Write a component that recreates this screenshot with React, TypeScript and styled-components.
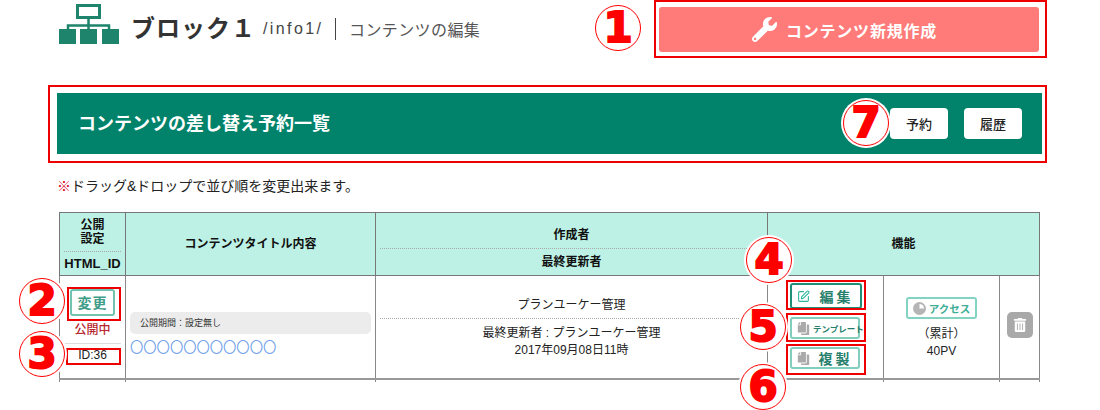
import React from "react";
import styled, { createGlobalStyle } from "styled-components";
import { FaWrench, FaTrashAlt, FaCopy } from "react-icons/fa";
import { LuSquarePen } from "react-icons/lu";

const Global = createGlobalStyle`
  html, body { margin: 0; padding: 0; background: #fff; }
  body { font-family: "Liberation Sans", "Noto Sans CJK JP", sans-serif; color: #222; }
`;

const Page = styled.div`
  position: relative;
  width: 1100px;
  height: 410px;
  overflow: hidden;
  padding-left: 57px;
  box-sizing: border-box;
`;

const TopBar = styled.header`
  display: flex;
  align-items: flex-start;
  height: 58px;
  padding-left: 2px;
`;

const TitleGroup = styled.div`
  display: flex;
  align-items: center;
  height: 58px;
`;

const TitleRow = styled.div`
  display: flex;
  align-items: center;
  margin-top: -1px;
`;

const BlockIcon = styled.svg`
  width: 60px;
  height: 40px;
  margin-top: 4px;
  align-self: flex-start;
  flex: none;
`;

const BlockTitle = styled.h1`
  margin: 0 0 0 12px;
  font-size: 24px;
  line-height: 30px;
  font-weight: 700;
  color: #333;
  letter-spacing: 1px;
  width: 132px;
  white-space: nowrap;
`;

const Path = styled.span`
  font-size: 16px;
  letter-spacing: 2.4px;
  color: #444;
  width: 72px;
  white-space: nowrap;
`;

const Divider = styled.span`
  width: 1px;
  height: 22px;
  background: #444;
  margin-right: 13px;
`;

const PageName = styled.span`
  font-size: 16px;
  color: #555;
  white-space: nowrap;
  letter-spacing: 0.4px;
`;

const NewButton = styled.button`
  position: absolute;
  left: 659px;
  top: 7px;
  width: 380px;
  height: 45px;
  border: 0;
  border-radius: 3px;
  background: #ff7b79;
  color: #fff;
  font: 700 16px "Liberation Sans", "Noto Sans CJK JP", sans-serif;
  letter-spacing: 0.8px;
  display: flex;
  align-items: center;
  justify-content: center;
  gap: 9px;
  padding: 0 9px 0 0;
`;

const Banner = styled.section`
  display: flex;
  align-items: center;
  justify-content: space-between;
  width: 985px;
  height: 61px;
  margin-top: 35px;
  padding: 0 20px 0 21px;
  box-sizing: border-box;
  background: #00836a;
`;

const BannerTitle = styled.h2`
  margin: 0 0 3px;
  font-size: 18px;
  font-weight: 700;
  color: #fff;
`;

const BannerActions = styled.div`
  display: flex;
  gap: 16px;
`;

const BannerButton = styled.button`
  width: 58px;
  height: 31px;
  border: 0;
  border-radius: 4px;
  background: #fff;
  color: #222;
  font: 500 13px "Liberation Sans", "Noto Sans CJK JP", sans-serif;
  padding: 0;
`;

const Note = styled.p`
  margin: 23px 0 0;
  height: 18px;
  line-height: 18px;
  font-size: 14px;
  color: #222;
  white-space: nowrap;
  b { color: #d8001c; font-weight: 400; }
`;

const TableClip = styled.div`
  margin: 17px 0 0 2px;
  width: 983px;
  height: 170px;
  overflow: hidden;
`;

const Table = styled.table`
  width: 980px;
  border-collapse: collapse;
  table-layout: fixed;
  font-size: 12px;
`;

const Th = styled.th`
  background: #bdf1e5;
  border: 1px solid #777;
  padding: 0 4px;
  height: 62px;
  font-size: 12px;
  font-weight: 700;
  color: #111;
  line-height: 14px;
`;

const Td = styled.td`
  border-left: 1px solid #888;
  border-right: 1px solid #888;
  border-bottom: 2px solid #999;
  height: 102px;
  padding: 0;
  text-align: center;
  vertical-align: middle;
  color: #222;
`;

const StubTd = styled.td`
  border-left: 1px solid #888;
  border-right: 1px solid #888;
  height: 8px;
  padding: 0;
`;

const HeadStack = styled.div<{ $offset?: number }>`
  display: flex;
  flex-direction: column;
  align-items: stretch;
  margin-top: ${(p) => p.$offset ?? 0}px;
`;

const HeadPart = styled.div<{ $h: number; $size?: number }>`
  height: ${(p) => p.$h}px;
  font-size: ${(p) => p.$size ?? 12}px;
  display: flex;
  align-items: center;
  justify-content: center;
  white-space: nowrap;
`;

const DottedRule = styled.div`
  border-top: 1px dotted #aaa;
  height: 0;
`;

const ChangeButton = styled.button`
  width: 45px;
  height: 27px;
  border: 2px solid #72c2b0;
  border-radius: 3px;
  background: #fff;
  color: #3f9c88;
  font: 700 14px "Liberation Sans", "Noto Sans CJK JP", sans-serif;
  padding: 0;
  letter-spacing: 1px;
`;

const StatusCell = styled.div`
  display: flex;
  flex-direction: column;
  align-items: center;
  margin-top: -4px;
`;

const StatusText = styled.div`
  font-size: 12px;
  font-weight: 500;
  color: #b5272d;
  margin-top: 7px;
  line-height: 14px;
`;

const IdText = styled.div`
  width: 56px;
  margin-top: 6px;
  padding-top: 4px;
  border-top: 1px solid #ddd;
  font-size: 12px;
  line-height: 14px;
`;

const ContentCell = styled.div`
  padding: 0 4px;
  text-align: left;
  margin-top: 14px;
`;

const Period = styled.div`
  height: 22px;
  line-height: 22px;
  border-radius: 5px;
  background: #ececec;
  padding-left: 10px;
  font-size: 9px;
  color: #333;
`;

const Circles = styled.div`
  margin-top: 6px;
  font-size: 13.3px;
  line-height: 16px;
  color: #6f9fe8;
  white-space: nowrap;
`;

const AuthorName = styled.div`
  font-size: 12px;
  line-height: 15px;
  margin-top: 3px;
  padding-bottom: 5px;
`;

const AuthorRule = styled.div`
  border-top: 1px dotted #aaa;
  margin: 0 4px 6px;
`;

const AuthorMeta = styled.div`
  font-size: 12px;
  line-height: 17px;
`;

const ActionStack = styled.div`
  display: flex;
  flex-direction: column;
  align-items: flex-start;
  padding-left: 22px;
  margin-top: -2px;
`;

const ActionButton = styled.button<{ $w: number; $h: number; $mt: number; $strong?: boolean }>`
  width: ${(p) => p.$w}px;
  height: ${(p) => p.$h}px;
  margin-top: ${(p) => p.$mt}px;
  border: 2px solid ${(p) => (p.$strong ? "#1f8f78" : "#82cdbb")};
  border-radius: 3px;
  background: #fff;
  color: #26806c;
  display: flex;
  align-items: center;
  gap: 3px;
  padding: 0 0 0 5px;
  font: 700 13px "Liberation Sans", "Noto Sans CJK JP", sans-serif;
  white-space: nowrap;
`;

const ActionLabel = styled.span<{ $size: number; $ls: number }>`
  font-size: ${(p) => p.$size}px;
  letter-spacing: ${(p) => p.$ls}px;
  flex: 1;
  text-align: center;
`;

const AccessCell = styled.div`
  margin-top: 3px;
`;

const AccessButton = styled.button`
  width: 71px;
  height: 22px;
  margin: 0 auto 7px;
  border: 2px solid #82d3c2;
  border-radius: 3px;
  background: #fff;
  color: #3fae96;
  display: flex;
  align-items: center;
  justify-content: center;
  gap: 3px;
  padding: 0;
  font: 700 10.5px "Liberation Sans", "Noto Sans CJK JP", sans-serif;
`;

const AccessText = styled.div`
  font-size: 12px;
  line-height: 17px;
`;

const TrashButton = styled.button`
  width: 26px;
  height: 26px;
  border: 0;
  border-radius: 5px;
  background: #a9a9a9;
  color: #fff;
  display: inline-flex;
  align-items: center;
  justify-content: center;
  padding: 0;
  margin-bottom: 4px;
  vertical-align: middle;
`;

const Frame = styled.div<{ $x: number; $y: number; $w: number; $h: number }>`
  position: absolute;
  left: ${(p) => p.$x}px;
  top: ${(p) => p.$y}px;
  width: ${(p) => p.$w}px;
  height: ${(p) => p.$h}px;
  border: 2px solid #ee0000;
  box-sizing: border-box;
  pointer-events: none;
`;

const Badge = styled.div<{ $x: number; $y: number }>`
  position: absolute;
  left: ${(p) => p.$x - 23}px;
  top: ${(p) => p.$y - 23}px;
  width: 46px;
  height: 46px;
  box-sizing: border-box;
  border: 1.5px solid #f00;
  border-radius: 50%;
  background: #fff;
  box-shadow: 0 0 0 2px #fff;
  color: #f00;
  display: flex;
  align-items: center;
  justify-content: center;
  font: 700 42px "DejaVu Sans", sans-serif;
  -webkit-text-stroke: 2px #f00;
  line-height: 1;
`;

const copyIcon = <FaCopy size={13} color="#aaa" style={{ transform: "scaleX(-1)", flex: "none" }} />;

export default function App() {
  return (
    <Page>
      <Global />
      <TopBar>
        <BlockIcon viewBox="0 0 60 40">
          <rect x="18.5" y="1.5" width="22" height="12" fill="none" stroke="#1e846c" strokeWidth="3" />
          <path d="M29.5 15v5M9 28v-6.5h41V28M29.5 20v8" fill="none" stroke="#1e846c" strokeWidth="2.5" />
          <rect x="0" y="25" width="17" height="15" fill="#1e846c" />
          <rect x="21" y="25" width="17" height="15" fill="#1e846c" />
          <rect x="43" y="25" width="17" height="15" fill="#1e846c" />
        </BlockIcon>
        <TitleGroup>
          <TitleRow>
            <BlockTitle>ブロック１</BlockTitle>
            <Path>/info1/</Path>
            <Divider />
            <PageName>コンテンツの編集</PageName>
          </TitleRow>
        </TitleGroup>
      </TopBar>
      <NewButton>
        <FaWrench size={25} />
        コンテンツ新規作成
      </NewButton>

      <Banner>
        <BannerTitle>コンテンツの差し替え予約一覧</BannerTitle>
        <BannerActions>
          <BannerButton>予約</BannerButton>
          <BannerButton>履歴</BannerButton>
        </BannerActions>
      </Banner>

      <Note>
        <b>※</b>ドラッグ&amp;ドロップで並び順を変更出来ます。
      </Note>

      <TableClip>
        <Table>
          <colgroup>
            <col width="66" />
            <col width="250" />
            <col width="392" />
            <col width="116" />
            <col width="116" />
            <col width="40" />
          </colgroup>
          <thead>
            <tr>
              <Th>
                <HeadStack>
                  <HeadPart $h={38}>公開<br />設定</HeadPart>
                  <DottedRule />
                  <HeadPart $h={23} $size={13}>HTML_ID</HeadPart>
                </HeadStack>
              </Th>
              <Th>コンテンツタイトル内容</Th>
              <Th>
                <HeadStack $offset={9}>
                  <HeadPart $h={26}>作成者</HeadPart>
                  <DottedRule />
                  <HeadPart $h={26}>最終更新者</HeadPart>
                </HeadStack>
              </Th>
              <Th colSpan={3}>機能</Th>
            </tr>
          </thead>
          <tbody>
            <tr>
              <Td>
                <StatusCell>
                  <ChangeButton>変更</ChangeButton>
                  <StatusText>公開中</StatusText>
                  <IdText>ID:36</IdText>
                </StatusCell>
              </Td>
              <Td>
                <ContentCell>
                  <Period>公開期間：設定無し</Period>
                  <Circles>〇〇〇〇〇〇〇〇〇〇〇</Circles>
                </ContentCell>
              </Td>
              <Td>
                <AuthorName>プランユーケー管理</AuthorName>
                <AuthorRule />
                <AuthorMeta>
                  最終更新者 : プランユーケー管理
                  <br />
                  2017年09月08日11時
                </AuthorMeta>
              </Td>
              <Td>
                <ActionStack>
                  <ActionButton $w={72} $h={26} $mt={0} $strong>
                    <LuSquarePen size={13} color="#2bb59a" style={{ flex: "none" }} />
                    <ActionLabel $size={14} $ls={3}>編集</ActionLabel>
                  </ActionButton>
                  <ActionButton $w={70} $h={22} $mt={8}>
                    {copyIcon}
                    <ActionLabel $size={8.5} $ls={0}>テンプレート</ActionLabel>
                  </ActionButton>
                  <ActionButton $w={70} $h={22} $mt={8}>
                    {copyIcon}
                    <ActionLabel $size={14} $ls={3}>複製</ActionLabel>
                  </ActionButton>
                </ActionStack>
              </Td>
              <Td>
                <AccessCell>
                  <AccessButton>
                    <svg width="13" height="13" viewBox="0 0 13 13">
                      <circle cx="6.5" cy="6.5" r="6.5" fill="#b5b5b5" />
                      <path d="M6.5 6.5V2a4.5 4.5 0 0 1 4.5 4.5z" fill="#fff" />
                    </svg>
                    アクセス
                  </AccessButton>
                  <AccessText>
                    （累計）
                    <br />
                    40PV
                  </AccessText>
                </AccessCell>
              </Td>
              <Td>
                <TrashButton>
                  <FaTrashAlt size={14} />
                </TrashButton>
              </Td>
            </tr>
            <tr>
              <StubTd /><StubTd /><StubTd /><StubTd /><StubTd /><StubTd />
            </tr>
          </tbody>
        </Table>
      </TableClip>

      <Frame $x={654} $y={0} $w={393} $h={58} />
      <Frame $x={48} $y={85} $w={999} $h={78} />
      <Frame $x={67} $y={287} $w={54} $h={34} />
      <Frame $x={66} $y={348} $w={55} $h={17} />
      <Frame $x={786} $y={280} $w={80} $h={30} />
      <Frame $x={786} $y={313} $w={80} $h={29} />
      <Frame $x={786} $y={344} $w={80} $h={31} />

      <Badge $x={618} $y={28}>1</Badge>
      <Badge $x={42} $y={301}>2</Badge>
      <Badge $x={42} $y={354}>3</Badge>
      <Badge $x={769} $y={260}>4</Badge>
      <Badge $x={763} $y={327}>5</Badge>
      <Badge $x={763} $y={387}>6</Badge>
      <Badge $x={866} $y={123}>7</Badge>
    </Page>
  );
}
